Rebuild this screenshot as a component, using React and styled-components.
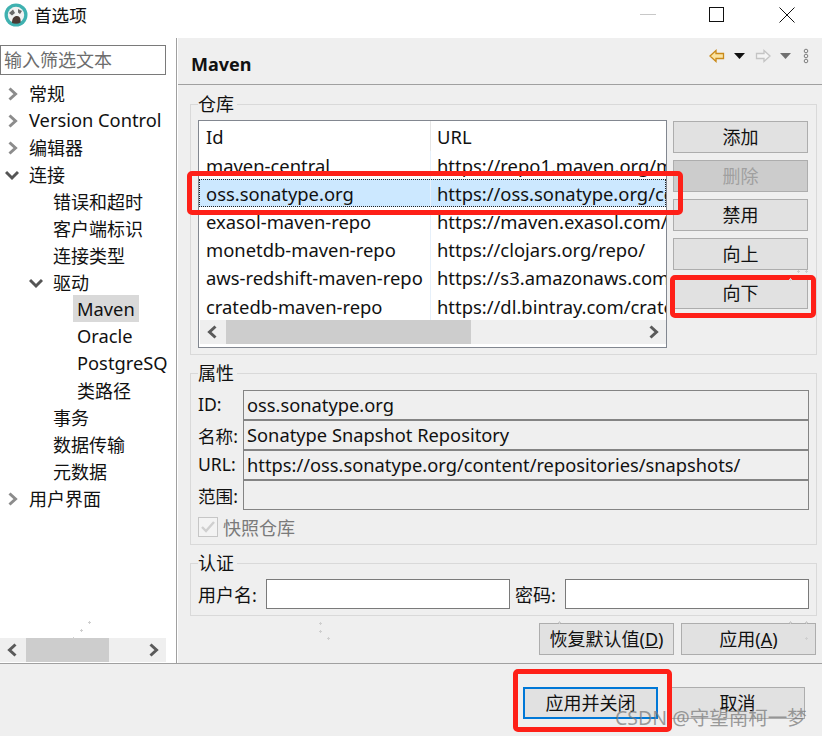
import React from "react";
import styled, { createGlobalStyle } from "styled-components";

const Global = createGlobalStyle`
  html, body { margin: 0; padding: 0; background: #fff; }
  * { box-sizing: border-box; }
  body { font-family: "Noto Sans", "Noto Sans CJK SC", sans-serif; font-size: 18px; color: #111; }
`;
const Window = styled.div`position: relative; width: 822px; height: 736px; display: flex; flex-direction: column; overflow: hidden; background: #fff;`;
const TitleBar = styled.div`height: 38px; flex: none; display: flex; align-items: center; padding-left: 4px; background: #fff;`;
const TitleText = styled.span`margin-left: 6px; font-size: 17.6px; line-height: 1; margin-top: -7px;`;
const TitleLogo = styled.svg`width: 24px; height: 24px; margin-top: -8px;`;
const WinControls = styled.div`margin-left: auto; display: flex; height: 30px; margin-top: -8px;`;
const WinBtn = styled.div`width: 71px; display: flex; align-items: center; justify-content: center; margin-right: ${p => p.$shift || 0}px;`;
const Main = styled.div`flex: 1; min-height: 0; display: flex;`;
const Sidebar = styled.div`width: 178px; flex: none; display: flex; flex-direction: column; background: #fff; border-right: 1px solid #fff; position: relative; &::after { content: ""; position: absolute; right: 0; top: 0; bottom: 0; width: 1px; background: #a0a0a0; }`;
const Filter = styled.input`width: 166px; height: 30px; margin-top: 7px; margin-bottom: 4px; border: 1px solid #7a7a7a; padding: 0 3px; font: inherit; font-size: 18px; color: #111; &::placeholder { color: #6d6d6d; opacity: 1; }`;
const Tree = styled.div`flex: 1; width: 167px; overflow: hidden;`;
const TreeRow = styled.div`height: 27px; display: flex; align-items: center; padding-left: ${p => p.$depth * 24 + 5}px; white-space: nowrap;`;
const Twisty = styled.span`width: 24px; flex: none; display: flex; align-items: center; margin-top: 2px;`;
const TreeLabel = styled.span`padding: ${p => p.$latin ? 0 : 4}px 4px 0; margin-left: -4px; line-height: 27px; font-size: ${p => p.$latin ? 18.3 : 18}px; background: ${p => p.$selected ? "#d9d9d9" : "transparent"};`;
const HScroll = styled.div`flex: none; height: 24px; margin-left: ${p => p.$inset || 0}px; width: ${p => p.$width}; display: flex; align-items: center; background: #efefef; position: relative;`;
const ScrollEnd = styled.span`width: 26px; flex: none; display: flex; align-items: center; justify-content: center;`;
const ScrollTrack = styled.span`flex: 1; align-self: stretch; display: flex;`;
const Thumb = styled.span`width: ${p => p.$width}px; background: #cdcdcd; height: 100%;`;
const SideFill = styled.div`height: 1px; flex: none;`;
const Panel = styled.div`flex: 1; min-width: 0; display: flex; flex-direction: column; background: #efefef;`;
const PanelHead = styled.div`height: 47px; flex: none; display: flex; align-items: center; padding: 0 11px 0 13px; border-bottom: 1px solid #a0a0a0;`;
const PanelTitle = styled.h1`margin: 0; font-size: 18px; font-weight: 700; color: #111; margin-top: 6px;`;
const NavIcons = styled.div`margin-left: auto; display: flex; align-items: center; margin-top: -10px;`;
const PanelBody = styled.div`flex: 1; min-height: 0; display: flex; flex-direction: column; padding: 7px 5px 6px 12px;`;
const Group = styled.fieldset`margin: 0 0 6px; padding: ${p => p.$pad || "4px 7px 6px"}; border: 1px solid #d9d9d9; min-width: 0;`;
const Legend = styled.legend`padding: 0 3px 0 0; line-height: 24px; height: 24px; font-size: 18px;`;
const RepoRow = styled.div`display: flex; gap: 6px;`;
const TableBox = styled.div`width: 469px; height: 228px; border: 1px solid #828790; background: #fff; display: flex; flex-direction: column; position: relative; overflow: hidden;`;
const Rows = styled.div`flex: 1; font-size: 18.4px;`;
const Row = styled.div`height: ${p => p.$h || 28.2}px; display: flex; align-items: center; white-space: nowrap; background: ${p => p.$selected ? "#cce8ff" : "transparent"}; outline: ${p => p.$selected ? "1px dotted #222" : "none"}; outline-offset: -1px;`;
const CellId = styled.div`width: 232px; flex: none; padding-left: 7px; border-right: 1px solid ${p => p.$head ? "#e5e5e5" : "#e6f0fa"}; align-self: stretch; display: flex; align-items: center;`;
const CellUrl = styled.div`flex: 1; min-width: 0; padding-left: 6px; overflow: hidden;`;
const TableFoot = styled.div`height: 3px; flex: none;`;
const SideButtons = styled.div`display: flex; flex-direction: column; gap: 7px; padding-top: 1px; width: 135px;`;
const Btn = styled.button`height: 32px; width: 135px; font: inherit; font-size: 18px; color: ${p => p.disabled ? "#a0a0a0" : "#111"}; background: ${p => p.disabled ? "#cccccc" : "#e1e1e1"}; border: ${p => p.$primary ? "2px solid #0078d7" : "1px solid #adadad"}; padding: 0; line-height: 1;`;
const Under = styled.span`text-decoration: underline;`;
const PropRow = styled.div`display: flex; align-items: stretch; height: 30px; margin-top: ${p => p.$first ? "1px" : "0"};`;
const PropLabel = styled.label`width: 45px; flex: none; display: flex; align-items: center; font-size: 17.6px; padding-bottom: ${p => p.$latin ? 2 : 0}px;`;
const PropValue = styled.div`flex: 1; min-width: 0; border: 1px solid #848484; background: #efefef; display: flex; align-items: center; padding: 0 0 2px 3px; white-space: nowrap; overflow: hidden; font-size: 18.3px;`;
const CheckRow = styled.div`display: flex; align-items: center; height: 20px; margin-top: 7px; color: #7a7a7a; font-size: 18px;`;
const CheckBox = styled.span`width: 20px; height: 20px; border: 1px solid #c6c6c6; background: #f3f3f3; display: flex; align-items: center; justify-content: center; margin-right: 5px;`;
const AuthRow = styled.div`display: flex; align-items: center; gap: 5px;`;
const AuthLabel = styled.label`font-size: 18px; white-space: nowrap; width: ${p => p.$w}px; flex: none;`;
const AuthInput = styled.input`width: 244px; height: 30px; border: 1px solid #7a7a7a; background: #fff; padding: 0 3px; font: inherit;`;
const ActionRow = styled.div`display: flex; justify-content: flex-end; gap: 7px; margin-top: 1px; padding-right: 1px;`;
const Footer = styled.div`height: 73px; flex: none; display: flex; justify-content: flex-end; gap: 12px; padding: 23px 17px 0 0; background: #efefef; border-top: 1px solid #a0a0a0;`;
const Highlight = styled.div`position: absolute; border: 5px solid #fe2018; border-radius: 5px; pointer-events: none; left: ${p => p.$x}px; top: ${p => p.$y}px; width: ${p => p.$w}px; height: ${p => p.$h}px;`;
const Watermark = styled.div`position: absolute; left: 615px; top: 707px; font-size: 19.5px; line-height: 22px; color: rgba(120,120,120,.72); white-space: nowrap;`;
const Speck = styled.span`position: absolute; left: ${p => p.$x - 1}px; top: ${p => p.$y - 1}px; width: 3px; height: 3px; background: linear-gradient(#cfcfcf, #cfcfcf) center / 3px 1px no-repeat, linear-gradient(#cfcfcf, #cfcfcf) center / 1px 3px no-repeat;`;

const Chev = ({ dir = "right", color = "#8c8c8c", size = 14, w = 3 }) => {
  const d = { right: "M4.5 1.5 L10.5 7 L4.5 12.5", left: "M9.5 1.5 L3.5 7 L9.5 12.5", down: "M1 4 L7 10 L13 4" }[dir];
  return <svg width={size} height={size} viewBox="0 0 14 14"><path d={d} fill="none" stroke={color} strokeWidth={w} /></svg>;
};
const isLatin = s => /^[A-Za-z: ]+$/.test(s);
const tree = [
  [0, "right", "常规"], [0, "right", "Version Control"], [0, "right", "编辑器"], [0, "down", "连接"],
  [1, null, "错误和超时"], [1, null, "客户端标识"], [1, null, "连接类型"], [1, "down", "驱动"],
  [2, null, "Maven", true], [2, null, "Oracle"], [2, null, "PostgreSQL"], [2, null, "类路径"],
  [1, null, "事务"], [1, null, "数据传输"], [1, null, "元数据"], [0, "right", "用户界面"],
];
const repos = [
  ["maven-central", "https://repo1.maven.org/maven2/"],
  ["oss.sonatype.org", "https://oss.sonatype.org/content/repositories/snapshots/", true],
  ["exasol-maven-repo", "https://maven.exasol.com/"],
  ["monetdb-maven-repo", "https://clojars.org/repo/"],
  ["aws-redshift-maven-repo", "https://s3.amazonaws.com/redshift-maven/"],
  ["cratedb-maven-repo", "https://dl.bintray.com/crate/crate/"],
];
const props = [
  ["ID:", "oss.sonatype.org"],
  ["名称:", "Sonatype Snapshot Repository"],
  ["URL:", "https://oss.sonatype.org/content/repositories/snapshots/"],
  ["范围:", ""],
];
const specks = [[89, 622], [81, 630], [73, 638], [320, 623], [320, 631], [328, 638], [559, 622], [790, 622], [806, 622], [806, 638], [798, 271], [806, 271], [790, 279]];
const Drop = ({ color }) => <svg width="30" height="10" viewBox="0 0 30 10"><path d="M9 2 H20 L14.5 8 Z" fill={color} /></svg>;
const ArrowIcon = ({ flip, fill, stroke }) => (
  <svg width="16" height="14" viewBox="0 0 16 14" style={flip ? { transform: "scaleX(-1)" } : undefined}>
    <path d="M1 7 L7 1.5 V4.5 H14.5 V9.5 H7 V12.5 Z" fill={fill} stroke={stroke} strokeWidth="1.3" />
  </svg>
);

export default function App() {
  return (
    <Window>
      <Global />
      <TitleBar>
        <TitleLogo viewBox="0 0 24 24">
          <circle cx="12" cy="12" r="11.5" fill="#3fb1b0" />
          <circle cx="12" cy="12" r="8.2" fill="#f2f2f2" />
          <path d="M8 20 C8 15 10 13 13 13 C16 13 17 16 16.5 19.5 C14 21 11 21 8 20 Z" fill="#4a3a34" />
          <path d="M5 10 L9 6.5 L11 10 L8 12.5 Z M14 6 L18 8 L16 11 L14 9.5 Z" fill="#6a6a6a" />
        </TitleLogo>
        <TitleText>首选项</TitleText>
        <WinControls>
          <WinBtn $shift={-3}><svg width="16" height="2"><rect width="16" height="1" fill="#c8c8c8" /></svg></WinBtn>
          <WinBtn><svg width="16" height="16"><rect x="1.5" y=".5" width="14" height="14" fill="none" stroke="#111" /></svg></WinBtn>
          <WinBtn><svg width="16" height="16"><path d="M.5 .5 L15.5 15.5 M15.5 .5 L.5 15.5" stroke="#111" /></svg></WinBtn>
        </WinControls>
      </TitleBar>
      <Main>
        <Sidebar>
          <Filter placeholder="输入筛选文本" />
          <Tree>
            {tree.map(([depth, twisty, label, selected]) => (
              <TreeRow key={label} $depth={depth}>
                <Twisty>{twisty && <Chev dir={twisty} color={twisty === "down" ? "#555" : "#8c8c8c"} />}</Twisty>
                <TreeLabel $selected={selected} $latin={isLatin(label)}>{label}</TreeLabel>
              </TreeRow>
            ))}
          </Tree>
          <HScroll $width="166px">
            <ScrollEnd><Chev dir="left" color="#5a5a5a" /></ScrollEnd>
            <ScrollTrack><Thumb $width={83} /></ScrollTrack>
            <ScrollEnd><Chev color="#5a5a5a" /></ScrollEnd>
          </HScroll>
          <SideFill />
        </Sidebar>
        <Panel>
          <PanelHead>
            <PanelTitle>Maven</PanelTitle>
            <NavIcons>
              <ArrowIcon fill="#fbe3a0" stroke="#c98a1b" />
              <Drop color="#111" />
              <ArrowIcon flip fill="#f4f4f4" stroke="#c4c4c4" />
              <Drop color="#707070" />
              <svg width="10" height="16" viewBox="0 0 10 16"><g fill="none" stroke="#7d7d7d" strokeWidth="1"><circle cx="5" cy="3" r="1.8" /><circle cx="5" cy="8" r="1.8" /><circle cx="5" cy="13" r="1.8" /></g></svg>
            </NavIcons>
          </PanelHead>
          <PanelBody>
            <Group>
              <Legend>仓库</Legend>
              <RepoRow>
                <TableBox>
                  <Rows>
                    <Row $h={30}><CellId $head>Id</CellId><CellUrl>URL</CellUrl></Row>
                    {repos.map(([id, url, selected]) => (
                      <Row key={id} $selected={selected}><CellId>{id}</CellId><CellUrl>{url}</CellUrl></Row>
                    ))}
                  </Rows>
                  <HScroll $width="calc(100% - 1px)" $inset={1}>
                    <ScrollEnd><Chev dir="left" color="#5a5a5a" /></ScrollEnd>
                    <ScrollTrack><Thumb $width={245} /></ScrollTrack>
                    <ScrollEnd><Chev color="#5a5a5a" /></ScrollEnd>
                  </HScroll>
                  <TableFoot />
                </TableBox>
                <SideButtons>
                  <Btn>添加</Btn>
                  <Btn disabled>删除</Btn>
                  <Btn>禁用</Btn>
                  <Btn>向上</Btn>
                  <Btn>向下</Btn>
                </SideButtons>
              </RepoRow>
            </Group>
            <Group $pad="4px 7px 7px">
              <Legend>属性</Legend>
              {props.map(([k, v], i) => (
                <PropRow key={k} $first={i === 0}><PropLabel $latin={isLatin(k)}>{k}</PropLabel><PropValue>{v}</PropValue></PropRow>
              ))}
              <CheckRow>
                <CheckBox><svg width="16" height="14" viewBox="0 0 16 14"><path d="M2 7 L6 11 L14 2" fill="none" stroke="#cfcfcf" strokeWidth="2.4" /></svg></CheckBox>
                快照仓库
              </CheckRow>
            </Group>
            <Group $pad="4px 7px 6px">
              <Legend>认证</Legend>
              <AuthRow>
                <AuthLabel $w={63}>用户名:</AuthLabel>
                <AuthInput />
                <AuthLabel $w={45}>密码:</AuthLabel>
                <AuthInput />
              </AuthRow>
            </Group>
            <ActionRow>
              <Btn>恢复默认值(<Under>D</Under>)</Btn>
              <Btn>应用(<Under>A</Under>)</Btn>
            </ActionRow>
          </PanelBody>
        </Panel>
      </Main>
      <Footer>
        <Btn $primary>应用并关闭</Btn>
        <Btn>取消</Btn>
      </Footer>
      <Highlight $x={187} $y={171} $w={496} $h={44} />
      <Highlight $x={670} $y={275} $w={146} $h={43} />
      <Highlight $x={513} $y={669} $w={159} $h={63} />
      {specks.map(([x, y]) => <Speck key={`${x}-${y}`} $x={x} $y={y} />)}
      <Watermark>CSDN @守望南柯一梦</Watermark>
    </Window>
  );
}
